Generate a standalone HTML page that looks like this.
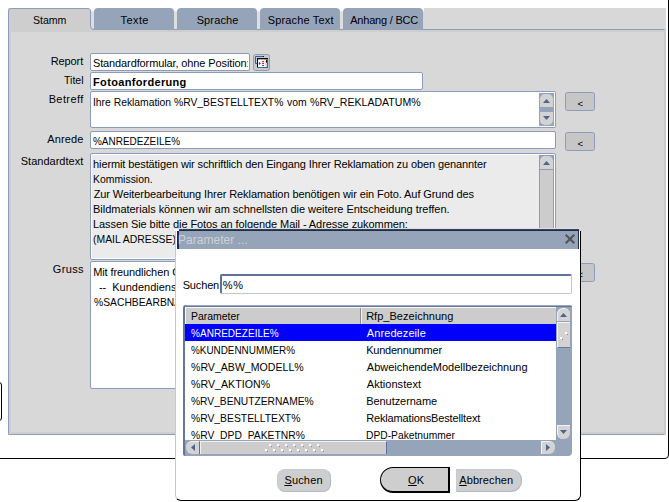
<!DOCTYPE html>
<html lang="de">
<head>
<meta charset="utf-8">
<title>Parameter</title>
<style>
html,body{margin:0;padding:0;background:#fff;}
body{width:669px;height:502px;position:relative;overflow:hidden;font-family:"Liberation Sans",sans-serif;font-size:11px;color:#000;}
.a{position:absolute;box-sizing:border-box;}
.t{position:absolute;white-space:nowrap;line-height:13px;height:13px;font-size:11px;transform-origin:0 0;}
.canvas{left:8px;top:8px;width:658px;height:427px;background:#d8d8d8;}
.panel{left:8px;top:29px;width:658px;height:406px;border:1px solid #8b9dbb;border-right:2px solid #cacaca;border-radius:0 2px 2px 2px;box-shadow:inset 2px 2px 0 0 #cecece,inset 0 -2px 0 0 #cecece;}
.tab{top:8px;height:22px;width:80px;background:#96a4ba;border-radius:4px 4px 0 0;}
.gap{top:8px;width:11px;height:21px;background:linear-gradient(#fff 0,#fff 2px,#dedede 4px,#dedede 100%);}
.tabact{left:8px;top:8px;width:83px;height:24px;background:#cecece;border:1px solid #8b9dbb;border-bottom:none;border-radius:6px 6px 0 0;}
.strip{left:9px;top:30px;width:655px;height:2px;background:#cfcfcf;}
.fld{background:#fff;border:1px solid #8b9dbb;border-radius:2px;overflow:hidden;box-shadow:inset 0 0 0 1px #fff;}
.btn{background:#c6c6c6;border:1px solid #8b9dbb;border-radius:2.5px;}
.sb{background:#96a4ba;overflow:hidden;}
.sbb{background:#d3d3d3;}
.dlg{left:175px;top:231px;width:406px;height:270px;background:#fff;border-right:1px solid #000;border-bottom:1px solid #000;border-left:1px solid #c8c8c8;border-radius:0 0 6px 6px;}
.pb{background:#cecece;border:1px solid #c4cad6;border-right-color:#aeb8ca;border-bottom-color:#aeb8ca;}
svg{position:absolute;overflow:visible;}
</style>
</head>
<body>
<div class="a" style="left:-20px;top:-20px;width:689px;height:479px;border:1px solid #000;border-radius:0 0 4px 0;"></div>
<div class="a" style="left:-10px;top:382px;width:12px;height:39px;border:1px solid #000;border-radius:3px;"></div>
<div class="a canvas"></div>
<div class="a panel"></div>
<div class="a gap" style="left:87px;"></div>
<div class="a gap" style="left:170px;"></div>
<div class="a gap" style="left:253px;"></div>
<div class="a gap" style="left:336px;"></div>
<div class="a gap" style="left:419px;width:5px;height:4px;"></div>
<svg class="a" style="left:0;top:0" width="100" height="40"><path d="M8.5 32V11Q8.5 8.5 11 8.5H88Q90.5 8.5 90.5 11V26Q90.5 29.5 94 29.5V32Z" fill="#cecece"/><path d="M8.5 32V11Q8.5 8.5 11 8.5H88Q90.5 8.5 90.5 11V26Q90.5 29.5 94 29.5" fill="none" stroke="#8b9dbb"/></svg>
<div class="a tab" style="left:94px;"></div>
<div class="a tab" style="left:177px;"></div>
<div class="a tab" style="left:260px;"></div>
<div class="a tab" style="left:343px;"></div>
<div class="a fld" style="left:90px;top:53px;width:160px;height:18px;background:#fff;"></div>
<div class="a fld" style="left:90px;top:72px;width:333px;height:18px;background:#fff;"></div>
<div class="a fld" style="left:90px;top:91px;width:466px;height:37px;background:#fff;"></div>
<div class="a fld" style="left:90px;top:131px;width:466px;height:18px;background:#fff;"></div>
<div class="a fld" style="left:90px;top:153px;width:466px;height:107px;background:#ebebeb;"></div>
<div class="a fld" style="left:90px;top:261px;width:466px;height:128px;background:#fff;"></div>
<div class="a btn" style="left:253px;top:54px;width:17px;height:17px;background:#c9c9c9;"></div>
<svg class="a" style="left:253px;top:54px" width="17" height="17" viewBox="0 0 17 17">
<path d="M11 2.5H2.5V9.5H4.2" fill="none" stroke="#1b6aa5" stroke-width="1"/>
<rect x="10" y="2" width="1" height="1" fill="#000"/>
<rect x="4.9" y="5.2" width="7.8" height="7.9" fill="#fff"/>
<rect x="12.7" y="5.2" width="1.4" height="7.9" fill="#d6d6d6"/>
<rect x="4" y="4" width="11" height="1.3" fill="#000"/>
<rect x="4" y="4" width="0.95" height="9.6" fill="#000"/>
<rect x="4" y="13" width="11" height="0.95" fill="#1b6aa5"/>
<rect x="14.1" y="5.2" width="0.95" height="8.7" fill="#1b6aa5"/>
<rect x="13.1" y="6" width="0.95" height="2.7" fill="#000"/>
<polygon points="5.8,7.7 8,9.4 5.8,11.1" fill="#1a3cf0"/>
<rect x="9.1" y="7" width="1.9" height="1.1" fill="#f01010"/>
<rect x="9.1" y="8.9" width="1.9" height="1.1" fill="#f01010"/>
<rect x="9.1" y="10.9" width="1.9" height="1.1" fill="#f01010"/>
</svg>
<div class="a btn" style="left:565px;top:92px;width:30px;height:19px;"></div>
<div class="t" style="left:577.6px;top:97px;font-size:9.5px;">&lt;</div>
<div class="a btn" style="left:565px;top:132px;width:30px;height:19px;"></div>
<div class="t" style="left:577.6px;top:137px;font-size:9.5px;">&lt;</div>
<div class="a btn" style="left:565px;top:263px;width:30px;height:19px;"></div>
<div class="t" style="left:577.6px;top:268px;font-size:9.5px;">&lt;</div>
<div class="a sb" style="left:539px;top:93px;width:15px;height:33px;"><div class="a sbb" style="left:1px;top:1px;width:13px;height:13px;border-radius:5px 5px 0 0;"></div><div class="a sbb" style="left:1px;top:19px;width:13px;height:13px;border-radius:0 0 5px 5px;"></div></div>
<svg class="a" style="left:0;top:0" width="1" height="1"><polygon points="546.5,99 550,103 543,103" fill="#4f648c"/></svg>
<svg class="a" style="left:0;top:0" width="1" height="1"><polygon points="543,116 550,116 546.5,120" fill="#4f648c"/></svg>
<div class="a" style="left:539px;top:155px;width:15px;height:104px;background:#cccccc;border:1px solid #8b9dbb;border-bottom:none;"><div class="a" style="left:0;top:0;width:13px;height:14px;background:#96a4ba;"></div><div class="a" style="left:0;top:0;width:13px;height:14px;background:#d3d3d3;border-radius:5px 5px 0 0;border-bottom:1px solid #8b9dbb;"></div></div>
<svg class="a" style="left:0;top:0" width="1" height="1"><polygon points="546.5,161 550,165 543,165" fill="#4f648c"/></svg>
<div class="t" id="g1" style="left:93.14px;top:266px;letter-spacing:-0.1px;">Mit freundlichen Grüßen</div>
<div class="t" id="g2a" style="left:98.89px;top:281px;">--</div>
<div class="t" id="g2b" style="left:112.24px;top:281px;">Kundendienst</div>
<div class="t" id="g3" style="left:93.51px;top:296px;letter-spacing:0.032px;transform:scaleX(0.9339);">%SACHBEARBNAME%</div>
<div class="t" id="s5" style="left:93.03px;top:218px;letter-spacing:-0.08px;">Lassen Sie bitte die Fotos an folgende Mail - Adresse zukommen:</div>
<div class="t" id="s6" style="left:92.96px;top:233px;letter-spacing:0.01px;transform:scaleX(0.9456);">(MAIL ADRESSE)</div>
<div class="t" id="l6" style="left:52.84px;top:263px;letter-spacing:0.344px;">Gruss</div>
<div class="a dlg"></div>
<div class="a" style="left:175px;top:228px;width:406px;height:1px;background:#dedede;"></div>
<div class="a" style="left:177px;top:229px;width:402px;height:2px;background:#1d2d49;border-top:1px solid #36455f;"></div>
<div class="a" style="left:177px;top:231px;width:402px;height:18px;background:#96a4ba;border-left:2px solid #1d2d49;border-right:1px solid #1d2d49;"></div>
<div class="a" style="left:175px;top:229px;width:4px;height:2px;background:#fff;"></div>
<svg class="a" style="left:565px;top:234px" width="10" height="10" viewBox="0 0 10 10"><path d="M0.7 0.7L9.3 9.3M9.3 0.7L0.7 9.3" stroke="#555" stroke-width="2.1" fill="none"/></svg>
<div class="a" style="left:220px;top:274px;width:352px;height:20px;background:#fff;border:1px solid #c6c6c6;border-top:2px solid #5f7397;border-left:2px solid #5f7397;border-radius:2px;"></div>
<div class="a" style="left:183px;top:305px;width:389px;height:151px;background:#96a4ba;border-radius:3px 2px 4px 2px;border-left:2px solid #65779a;border-top:2px solid #65779a;"></div>
<div class="a" style="left:186px;top:305px;width:385px;height:1px;background:#9ca9bf;"></div>
<div class="a" style="left:185px;top:307px;width:371px;height:133px;background:#fff;"></div>
<div class="a" style="left:185px;top:307px;width:371px;height:17px;background:#cccccc;border-top:1px solid #fafafa;border-left:1px solid #fafafa;"></div>
<div class="a" style="left:360px;top:308px;width:1px;height:16px;background:#8a8a8a;"></div>
<div class="a" style="left:361px;top:308px;width:1px;height:16px;background:#f4f4f4;"></div>
<div class="a" style="left:185px;top:324px;width:371px;height:17px;background:#0000fc;"></div>
<div class="a sbb" style="left:557px;top:308px;width:13px;height:13px;border-radius:6px 6px 0 0;border-left:1px solid #f4f4f4;border-top:1px solid #f4f4f4;"></div>
<svg class="a" style="left:0;top:0" width="1" height="1"><polygon points="563.5,313 567,317 560,317" fill="#4f648c"/></svg>
<div class="a sbb" style="left:557px;top:322px;width:13px;height:26px;border-left:1px solid #f4f4f4;border-top:1px solid #f4f4f4;border-bottom:1px solid #66789a;"></div>
<svg class="a" style="left:0;top:0" width="1" height="1"><rect x="565" y="332" width="2" height="2" fill="#fff"/><rect x="567" y="334" width="1" height="1" fill="#8a8a8a"/><rect x="560" y="337" width="2" height="2" fill="#fff"/><rect x="562" y="339" width="1" height="1" fill="#8a8a8a"/></svg>
<div class="a sbb" style="left:557px;top:425px;width:13px;height:14px;border-radius:0 0 6px 6px;border-left:1px solid #f4f4f4;border-top:1px solid #f4f4f4;"></div>
<svg class="a" style="left:0;top:0" width="1" height="1"><polygon points="560,430 567,430 563.5,434" fill="#4f648c"/></svg>
<div class="a sbb" style="left:186px;top:441px;width:14px;height:13px;border-radius:6px 0 0 6px;border-top:1px solid #f2f2f2;border-right:1px solid #5f7194;"></div>
<svg class="a" style="left:0;top:0" width="1" height="1"><polygon points="195,444 195,451 191,447.5" fill="#4f648c"/></svg>
<div class="a sbb" style="left:200px;top:441px;width:187px;height:13px;background:#cdcdcd;border-top:1px solid #f2f2f2;border-left:1px solid #f2f2f2;border-right:1px solid #5f7194;"></div>
<svg class="a" style="left:0;top:0" width="1" height="1"><rect x="269" y="444" width="2" height="2" fill="#fff"/><rect x="271" y="446" width="1" height="1" fill="#8a8a8a"/><rect x="277" y="444" width="2" height="2" fill="#fff"/><rect x="279" y="446" width="1" height="1" fill="#8a8a8a"/><rect x="285" y="444" width="2" height="2" fill="#fff"/><rect x="287" y="446" width="1" height="1" fill="#8a8a8a"/><rect x="293" y="444" width="2" height="2" fill="#fff"/><rect x="295" y="446" width="1" height="1" fill="#8a8a8a"/><rect x="301" y="444" width="2" height="2" fill="#fff"/><rect x="303" y="446" width="1" height="1" fill="#8a8a8a"/><rect x="309" y="444" width="2" height="2" fill="#fff"/><rect x="311" y="446" width="1" height="1" fill="#8a8a8a"/><rect x="317" y="444" width="2" height="2" fill="#fff"/><rect x="319" y="446" width="1" height="1" fill="#8a8a8a"/><rect x="265" y="449" width="2" height="2" fill="#fff"/><rect x="267" y="451" width="1" height="1" fill="#8a8a8a"/><rect x="273" y="449" width="2" height="2" fill="#fff"/><rect x="275" y="451" width="1" height="1" fill="#8a8a8a"/><rect x="281" y="449" width="2" height="2" fill="#fff"/><rect x="283" y="451" width="1" height="1" fill="#8a8a8a"/><rect x="289" y="449" width="2" height="2" fill="#fff"/><rect x="291" y="451" width="1" height="1" fill="#8a8a8a"/><rect x="297" y="449" width="2" height="2" fill="#fff"/><rect x="299" y="451" width="1" height="1" fill="#8a8a8a"/><rect x="305" y="449" width="2" height="2" fill="#fff"/><rect x="307" y="451" width="1" height="1" fill="#8a8a8a"/><rect x="313" y="449" width="2" height="2" fill="#fff"/><rect x="315" y="451" width="1" height="1" fill="#8a8a8a"/><rect x="321" y="449" width="2" height="2" fill="#fff"/><rect x="323" y="451" width="1" height="1" fill="#8a8a8a"/></svg>
<div class="a sbb" style="left:541px;top:441px;width:14px;height:13px;border-radius:0 6px 6px 0;border-top:1px solid #f2f2f2;border-left:1px solid #f2f2f2;"></div>
<svg class="a" style="left:0;top:0" width="1" height="1"><polygon points="546,444 550,447.5 546,451" fill="#4f648c"/></svg>
<div class="a pb" style="left:277px;top:469px;width:54px;height:23px;border-radius:8px;"></div>
<div class="a pb" style="left:380px;top:467px;width:70px;height:26px;border:1px solid #000;border-width:1px 2px 2px 1px;border-radius:13px 0 0 13px;"></div>
<div class="a pb" style="left:456px;top:469px;width:66px;height:23px;border-radius:0 11px 11px 0;"></div>
<div class="t" id="tab1" style="left:33.45px;top:14px;letter-spacing:-0.023px;transform:scaleX(0.9623);">Stamm</div>
<div class="t" id="tab2" style="left:120.51px;top:14px;letter-spacing:0.422px;">Texte</div>
<div class="t" id="tab3" style="left:196.65px;top:14px;letter-spacing:0.134px;">Sprache</div>
<div class="t" id="tab4" style="left:267.65px;top:14px;letter-spacing:0.17px;">Sprache Text</div>
<div class="t" id="tab5" style="left:350.17px;top:14px;letter-spacing:-0.201px;">Anhang / BCC</div>
<div class="t" id="l1" style="left:50.65px;top:55px;letter-spacing:-0.087px;">Report</div>
<div class="t" id="l2" style="left:64.15px;top:74px;letter-spacing:0.036px;transform:scaleX(0.9532);">Titel</div>
<div class="t" id="l3" style="left:48.65px;top:93px;letter-spacing:0.394px;">Betreff</div>
<div class="t" id="l4" style="left:47.17px;top:133px;letter-spacing:0.152px;">Anrede</div>
<div class="t" id="l5" style="left:20.75px;top:155px;letter-spacing:0.008px;">Standardtext</div>
<div class="t" id="f2" style="left:93.07px;top:76px;letter-spacing:0.333px;font-weight:bold;">Fotoanforderung</div>
<div class="t" id="f3a" style="left:92.88px;top:96px;letter-spacing:-0.012px;transform:scaleX(0.9413);">Ihre Reklamation</div>
<div class="t" id="f3b" style="left:174.41px;top:96px;letter-spacing:0.007px;transform:scaleX(0.9391);">%RV_BESTELLTEXT%</div>
<div class="t" id="f3c" style="left:287.03px;top:96px;letter-spacing:-0.004px;transform:scaleX(0.947);">vom</div>
<div class="t" id="f3d" style="left:310.43px;top:96px;letter-spacing:0.016px;transform:scaleX(0.959);">%RV_REKLADATUM%</div>
<div class="t" id="f4" style="left:93.39px;top:135px;letter-spacing:0.019px;transform:scaleX(0.9056);">%ANREDEZEILE%</div>
<div class="t" id="s1" style="left:93.05px;top:158px;letter-spacing:-0.108px;">hiermit bestätigen wir schriftlich den Eingang Ihrer Reklamation zu oben genannter</div>
<div class="t" id="s2" style="left:93.06px;top:173px;letter-spacing:-0.002px;transform:scaleX(0.9475);">Kommission.</div>
<div class="t" id="s3" style="left:93.64px;top:188px;letter-spacing:-0.085px;">Zur Weiterbearbeitung Ihrer Reklamation benötigen wir ein Foto. Auf Grund des</div>
<div class="t" id="s4" style="left:93.05px;top:203px;letter-spacing:-0.031px;">Bildmaterials können wir am schnellsten die weitere Entscheidung treffen.</div>
<div class="t" id="dt" style="left:178.40px;top:233px;font-size:13px;letter-spacing:0.027px;transform:scaleX(0.9244);color:#cdd1d8;">Parameter ...</div>
<div class="t" id="ds" style="left:182.65px;top:279px;letter-spacing:-0.145px;">Suchen</div>
<div class="t" id="di" style="left:222.86px;top:279px;letter-spacing:0.721px;">%%</div>
<div class="t" id="h1" style="left:190.79px;top:310px;letter-spacing:0.009px;transform:scaleX(0.9494);">Parameter</div>
<div class="t" id="h2" style="left:366.15px;top:310px;letter-spacing:0.029px;">Rfp_Bezeichnung</div>
<div class="t" id="r0a" style="left:191.19px;top:327px;letter-spacing:0.029px;transform:scaleX(0.9098);color:#fff;">%ANREDEZEILE%</div>
<div class="t" id="r1a" style="left:191.19px;top:344px;letter-spacing:-0.01px;transform:scaleX(0.9014);">%KUNDENNUMMER%</div>
<div class="t" id="r2a" style="left:191.13px;top:361px;letter-spacing:0.014px;transform:scaleX(0.9603);">%RV_ABW_MODELL%</div>
<div class="t" id="r3a" style="left:191.13px;top:378px;letter-spacing:0.033px;transform:scaleX(0.9641);">%RV_AKTION%</div>
<div class="t" id="r4a" style="left:191.12px;top:395px;letter-spacing:-0.008px;transform:scaleX(0.9311);">%RV_BENUTZERNAME%</div>
<div class="t" id="r5a" style="left:191.11px;top:412px;letter-spacing:0.007px;transform:scaleX(0.9391);">%RV_BESTELLTEXT%</div>
<div class="a" style="left:186px;top:426px;width:370px;height:14px;overflow:hidden;"><div class="t" id="r6a" style="left:5.11px;top:3px;letter-spacing:0.024px;transform:scaleX(0.9358);">%RV_DPD_PAKETNR%</div></div>
<div class="t" id="r0b" style="left:366.87px;top:327px;letter-spacing:0.079px;color:#fff;">Anredezeile</div>
<div class="t" id="r1b" style="left:366.14px;top:344px;letter-spacing:-0.213px;">Kundennummer</div>
<div class="t" id="r2b" style="left:366.87px;top:361px;letter-spacing:-0.006px;">AbweichendeModellbezeichnung</div>
<div class="t" id="r3b" style="left:366.87px;top:378px;letter-spacing:0.031px;">Aktionstext</div>
<div class="t" id="r4b" style="left:366.15px;top:395px;letter-spacing:-0.05px;">Benutzername</div>
<div class="t" id="r5b" style="left:366.15px;top:412px;letter-spacing:-0.147px;">ReklamationsBestelltext</div>
<div class="a" style="left:186px;top:426px;width:370px;height:14px;overflow:hidden;"><div class="t" id="r6b" style="left:180.15px;top:3px;letter-spacing:0.015px;transform:scaleX(0.9308);">DPD-Paketnummer</div></div>
<div class="a" style="left:91px;top:54px;width:156.5px;height:16px;overflow:hidden;"><div class="t" id="f1" style="left:1.95px;top:3px;letter-spacing:-0.116px;">Standardformular, ohne Position:</div></div>
<div class="t" id="bs" style="left:284.45px;top:474px;letter-spacing:0.155px;"><u>S</u>uchen</div>
<div class="t" id="bo" style="left:408.09px;top:474px;letter-spacing:0.122px;"><u>O</u>K</div>
<div class="t" id="ba" style="left:459.27px;top:474px;letter-spacing:0.085px;"><u>A</u>bbrechen</div>
</body>
</html>
